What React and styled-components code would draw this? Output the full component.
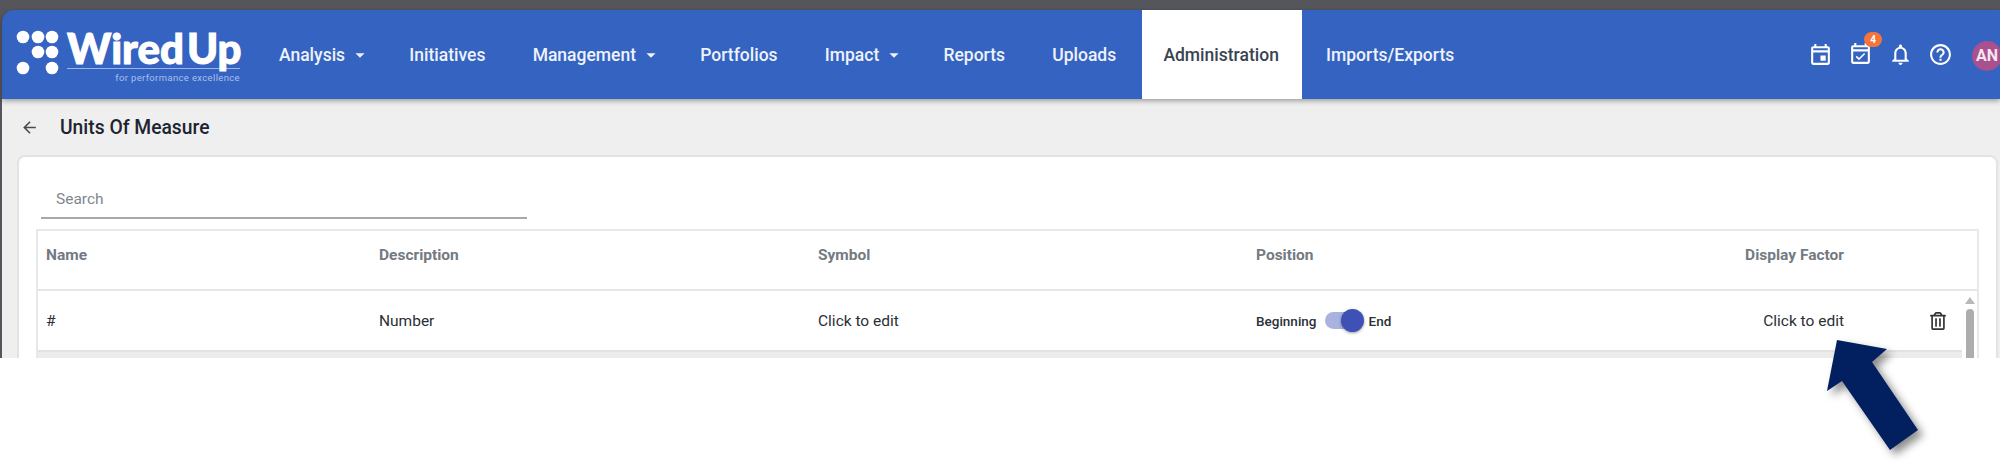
import styled, { createGlobalStyle } from 'styled-components'
import {
  MdArrowBack,
  MdOutlineEvent,
  MdOutlineEventAvailable,
  MdOutlineNotifications,
  MdHelpOutline,
  MdArrowDropDown,
} from 'react-icons/md'
import { FaRegTrashAlt } from 'react-icons/fa'

const GlobalStyle = createGlobalStyle`
  html, body {
    margin: 0;
    padding: 0;
    background: #fff;
    font-family: Roboto, "Liberation Sans", sans-serif;
  }
`

const navItems = [
  { label: 'Analysis', caret: true },
  { label: 'Initiatives' },
  { label: 'Management', caret: true },
  { label: 'Portfolios' },
  { label: 'Impact', caret: true },
  { label: 'Reports' },
  { label: 'Uploads' },
  { label: 'Administration', active: true },
  { label: 'Imports/Exports' },
]

function Logo() {
  const dots = [[9, 7], [24, 7], [38, 7], [24, 22], [38, 22], [9, 38], [38, 38]]
  return (
    <LogoWrap>
      <svg width="46" height="46" viewBox="0 0 46 46">
        {dots.map(([cx, cy]) => (
          <circle key={`${cx}-${cy}`} cx={cx} cy={cy} r="6.3" fill="#fff" />
        ))}
      </svg>
      <LogoText>
        <LogoName>Wired<LogoNameEnd>Up</LogoNameEnd></LogoName>
        <LogoTag>for performance excellence</LogoTag>
      </LogoText>
    </LogoWrap>
  )
}

export default function App() {
  return (
    <>
      <GlobalStyle />
      <Stage>
        <Frame>
          <Header>
            <Logo />
            <Nav>
              {navItems.map((item) => (
                <NavItem key={item.label} $active={item.active}>
                  {item.label}
                  {item.caret && <Caret />}
                </NavItem>
              ))}
            </Nav>
            <Tools>
              <MdOutlineEvent />
              <TaskIcon>
                <MdOutlineEventAvailable />
                <Badge>4</Badge>
              </TaskIcon>
              <MdOutlineNotifications />
              <MdHelpOutline />
              <Avatar>AN</Avatar>
            </Tools>
          </Header>

          <Page>
            <TitleBar>
              <MdArrowBack />
              <Title>Units Of Measure</Title>
            </TitleBar>

            <Card>
              <Search>Search</Search>
              <Table>
                <HeadRow>
                  <span>Name</span>
                  <span>Description</span>
                  <span>Symbol</span>
                  <span>Position</span>
                  <RightCell>Display Factor</RightCell>
                </HeadRow>
                <BodyArea>
                  <Rows>
                    <BodyRow>
                      <span>#</span>
                      <span>Number</span>
                      <span>Click to edit</span>
                      <PositionCell>
                        Beginning
                        <Track><Thumb /></Track>
                        End
                      </PositionCell>
                      <RightCell>Click to edit</RightCell>
                      <TrashCell><FaRegTrashAlt /></TrashCell>
                    </BodyRow>
                  </Rows>
                  <Scrollbar>
                    <ScrollUp />
                    <ScrollThumb />
                  </Scrollbar>
                </BodyArea>
              </Table>
            </Card>
          </Page>
        </Frame>

        <Pointer width="100" height="120" viewBox="0 0 100 120">
          <polygon points="10,0 60,9 45,22 91,90 63,110 15,41 0,51" fill="#02205f" />
        </Pointer>
      </Stage>
    </>
  )
}

const Stage = styled.div`
  position: relative;
  width: 2000px;
  height: 463px;
  overflow: hidden;
  background: #fff;
`

const Frame = styled.div`
  height: 348px;
  padding: 10px 0 0 2px;
  background: #55565b;
  display: flex;
  flex-direction: column;
  overflow: hidden;
`

const Header = styled.header`
  height: 89px;
  flex: none;
  display: flex;
  align-items: stretch;
  background: #3563c1;
  border-top-left-radius: 12px;
  box-shadow: 0 2px 5px rgba(0, 0, 0, 0.35);
  position: relative;
  z-index: 1;
`

const LogoWrap = styled.div`
  width: 253.4px;
  flex: none;
  display: flex;
  align-items: flex-start;
  gap: 7px;
  padding: 18px 0 0 12px;
  box-sizing: border-box;
  svg { margin-top: 2px; flex: none; }
`

const LogoText = styled.div`
  display: flex;
  flex-direction: column;
  width: 173px;
`

const LogoName = styled.div`
  font-family: Lato, sans-serif;
  font-weight: 900;
  font-size: 42px;
  line-height: 40px;
  color: #fff;
  white-space: nowrap;
  -webkit-text-stroke: 1px #fff;
  border-bottom: 1px solid #9db5e6;
`

const LogoNameEnd = styled.span`
  margin-left: 3px;
`

const LogoTag = styled.div`
  font-size: 9.5px;
  line-height: 12px;
  margin-top: 3px;
  text-align: right;
  letter-spacing: 0.35px;
  color: #a9c0ec;
  white-space: nowrap;
`

const Nav = styled.nav`
  display: flex;
  align-items: stretch;
`

const NavItem = styled.div`
  display: flex;
  align-items: center;
  padding: ${(p) => (p.$active ? '0 23.6px 0 21px' : '0 23.6px')};
  margin-left: ${(p) => (p.$active ? '2.6px' : '0')};
  font-size: 17.5px;
  font-weight: 500;
  white-space: nowrap;
  color: ${(p) => (p.$active ? '#3a4352' : '#eef2fb')};
  background: ${(p) => (p.$active ? '#fff' : 'transparent')};
`

const Caret = styled(MdArrowDropDown)`
  font-size: 22px;
  margin-left: 4px;
  margin-right: -9px;
`

const Tools = styled.div`
  margin-left: auto;
  display: flex;
  align-items: center;
  gap: 15px;
  color: #fff;
  svg { font-size: 25px; display: block; }
`

const TaskIcon = styled.div`
  position: relative;
  height: 25px;
`

const Badge = styled.span`
  position: absolute;
  top: -10px;
  right: -9px;
  width: 18px;
  height: 15px;
  border-radius: 8px;
  background: #f4743b;
  color: #fff;
  font-size: 10px;
  font-weight: 700;
  line-height: 15px;
  text-align: center;
`

const Avatar = styled.div`
  width: 30px;
  height: 30px;
  border-radius: 50%;
  margin: 2px -2px 0 4px;
  background: #a9508f;
  color: #f5e6f0;
  font-size: 16px;
  font-weight: 700;
  line-height: 30px;
  text-align: center;
  overflow: hidden;
`

const Page = styled.main`
  flex: 1;
  display: flex;
  flex-direction: column;
  background: #efefef;
  min-height: 0;
`

const TitleBar = styled.div`
  height: 58px;
  flex: none;
  display: flex;
  align-items: center;
  color: #4b4b4b;
  padding: 0 0 2px 18px;
  box-sizing: border-box;
  svg { font-size: 19px; }
`

const Title = styled.h1`
  margin: 0 0 0 21px;
  font-size: 19.3px;
  font-weight: 500;
  color: #1d2430;
`

const Card = styled.section`
  flex: 1;
  background: #fff;
  margin: 0 4px 0 17px;
  border-top-left-radius: 6px;
  border-top-right-radius: 6px;
  padding: 0 17px;
  box-shadow: 0 0 0 2px #e3e3e3;
`

const Search = styled.div`
  height: 62px;
  box-sizing: border-box;
  margin: 0 0 10px 5px;
  width: 486px;
  padding: 29px 0 0 15px;
  border-bottom: 2px solid #a9a9a9;
  font-size: 15.5px;
  line-height: 26px;
  color: #7f8790;
`

const Table = styled.div`
  border: 2px solid #e8e8e8;
  border-bottom: 0;
`

const columns = '333px 439px 438px 266px 322px 1fr'

const HeadRow = styled.div`
  display: grid;
  grid-template-columns: ${columns};
  height: 60px;
  padding: 0 0 10px 8px;
  box-sizing: border-box;
  align-items: center;
  border-bottom: 2px solid #e6e6e6;
  font-size: 15.5px;
  font-weight: 700;
  color: #737a82;
`

const BodyArea = styled.div`
  display: flex;
  background: #ececec;
`

const Rows = styled.div`
  flex: 1;
`

const BodyRow = styled.div`
  display: grid;
  grid-template-columns: ${columns};
  height: 61px;
  padding-left: 8px;
  box-sizing: border-box;
  align-items: center;
  background: #fff;
  border-bottom: 2px solid #e2e2e2;
  font-size: 15.5px;
  color: #2b2f36;
`

const RightCell = styled.span`
  text-align: right;
`

const PositionCell = styled.div`
  display: flex;
  align-items: center;
  font-size: 13.5px;
  font-weight: 500;
`

const Track = styled.div`
  position: relative;
  width: 38px;
  height: 17px;
  margin: 0 6px 0 8px;
  border-radius: 9px;
  background: #a9b3df;
`

const Thumb = styled.div`
  position: absolute;
  right: -1px;
  top: -3px;
  width: 23px;
  height: 23px;
  border-radius: 50%;
  background: #3f51b5;
  box-shadow: 0 1px 3px rgba(0, 0, 0, 0.4);
`

const TrashCell = styled.div`
  display: flex;
  justify-content: flex-end;
  padding-right: 15px;
  color: #333;
  svg { font-size: 18px; display: block; }
`

const Scrollbar = styled.div`
  width: 15px;
  flex: none;
  background: #fff;
  display: flex;
  flex-direction: column;
  align-items: center;
  padding-top: 6px;
  gap: 5px;
`

const ScrollUp = styled.div`
  width: 0;
  height: 0;
  border-left: 5px solid transparent;
  border-right: 5px solid transparent;
  border-bottom: 7px solid #b8b8b8;
`

const ScrollThumb = styled.div`
  width: 8px;
  height: 60px;
  border-radius: 4px;
  background: #adadad;
`

const Pointer = styled.svg`
  position: absolute;
  left: 1827px;
  top: 340px;
  overflow: visible;
  filter: drop-shadow(5px 5px 4px rgba(0, 0, 0, 0.45));
`
